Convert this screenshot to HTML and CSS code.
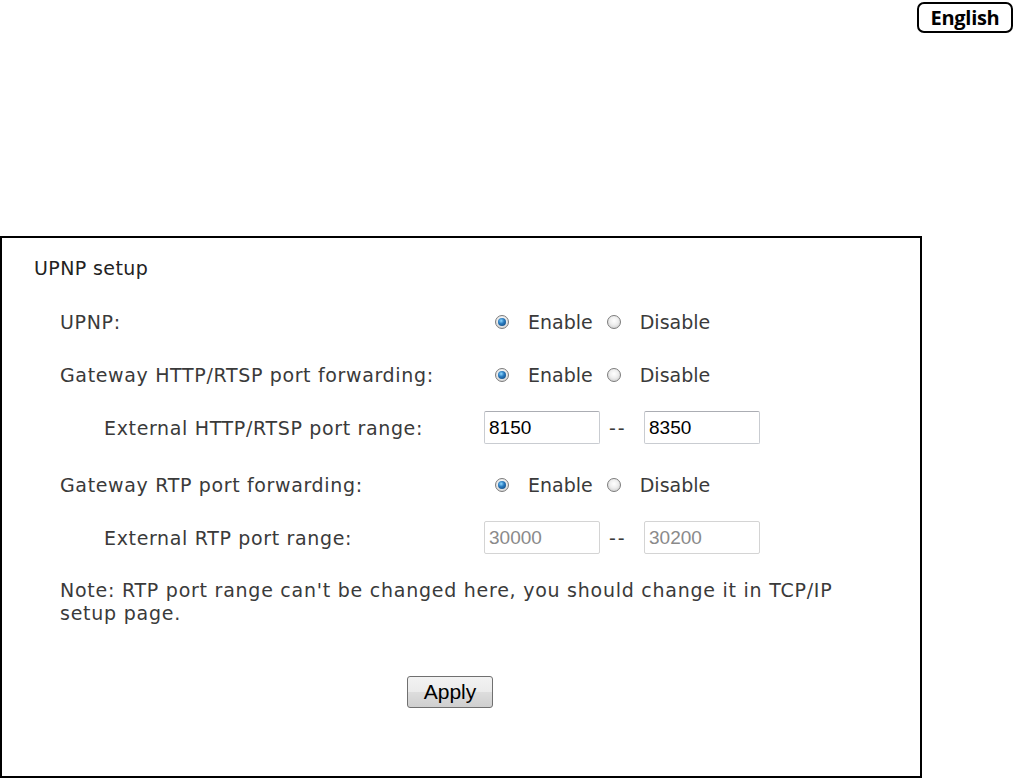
FILE: index.html
```html
<!DOCTYPE html>
<html lang="en">
<head>
<meta charset="utf-8">
<title>UPNP setup</title>
<link rel="stylesheet" href="styles.css">
</head>
<body>
<header class="top">
  <button class="lang" type="button">English</button>
</header>
<main class="panel">
  <div class="title">UPNP setup</div>
  <div class="form">
    <div class="row">
      <div class="label">UPNP:</div>
      <div class="ctrl">
        <input class="radio" type="radio" name="upnp" checked><span class="opt">Enable</span>
        <input class="radio radio-2" type="radio" name="upnp"><span class="opt">Disable</span>
      </div>
    </div>
    <div class="row">
      <div class="label">Gateway HTTP/RTSP port forwarding:</div>
      <div class="ctrl">
        <input class="radio" type="radio" name="http" checked><span class="opt">Enable</span>
        <input class="radio radio-2" type="radio" name="http"><span class="opt">Disable</span>
      </div>
    </div>
    <div class="row">
      <div class="label sub">External HTTP/RTSP port range:</div>
      <div class="ctrl">
        <input class="field" type="text" value="8150">
        <span class="sep">--</span>
        <input class="field" type="text" value="8350">
      </div>
    </div>
    <div class="row row-gap">
      <div class="label">Gateway RTP port forwarding:</div>
      <div class="ctrl">
        <input class="radio" type="radio" name="rtp" checked><span class="opt">Enable</span>
        <input class="radio radio-2" type="radio" name="rtp"><span class="opt">Disable</span>
      </div>
    </div>
    <div class="row">
      <div class="label sub">External RTP port range:</div>
      <div class="ctrl">
        <input class="field" type="text" value="30000" disabled>
        <span class="sep">--</span>
        <input class="field" type="text" value="30200" disabled>
      </div>
    </div>
    <p class="note">Note: RTP port range can't be changed here, you should change it in TCP/IP setup page.</p>
    <div class="actions">
      <button class="apply" type="button">Apply</button>
    </div>
  </div>
</main>
</body>
</html>
```
FILE: styles.css
```css
* { box-sizing: border-box; }

html, body {
  margin: 0;
  padding: 0;
  background: #fff;
}

body {
  width: 1018px;
  height: 778px;
  overflow: hidden;
  font-family: "DejaVu Sans", Verdana, sans-serif;
  font-size: 19px;
  color: #3a3a3a;
}

.top {
  height: 236px;
  display: flex;
  justify-content: flex-end;
  align-items: flex-start;
  padding: 2px 5px 0 0;
}

.lang {
  height: 31px;
  width: 96px;
  border: 2px solid #000;
  border-radius: 7px;
  background: #fff;
  font-family: "Open Sans", sans-serif;
  font-weight: 700;
  font-size: 20px;
  line-height: 25px;
  color: #000;
  padding: 0;
  letter-spacing: -0.3px;
}

.panel {
  width: 922px;
  height: 542px;
  border: 2px solid #000;
  padding: 19px 0 0 32px;
}

.title {
  line-height: 22px;
  height: 22px;
  color: #222;
  letter-spacing: 0.4px;
}

.form {
  width: 780px;
  margin: 16px 0 0 26px;
}

.row {
  display: flex;
  align-items: center;
  height: 53px;
}

.row-gap { margin-top: 4px; }

.label {
  width: 424px;
  flex: none;
  white-space: nowrap;
  letter-spacing: 0.65px;
}

.label.sub { padding-left: 44px; }

.ctrl {
  display: flex;
  align-items: center;
}

.radio {
  appearance: none;
  -webkit-appearance: none;
  width: 14px;
  height: 14px;
  margin: 0 19px 0 11px;
  border-radius: 50%;
  border: 1px solid #7c7c7c;
  background: radial-gradient(circle at 50% 40%, #ffffff 0%, #eeeeee 45%, #c4c4c4 100%);
  position: relative;
  flex: none;
}

.radio-2 { margin-left: 14px; }

.radio:checked::after {
  content: "";
  position: absolute;
  left: 2px;
  top: 2px;
  width: 8px;
  height: 8px;
  border-radius: 50%;
  background: radial-gradient(circle at 40% 35%, #8fd8ff 0%, #2a7cc0 40%, #0f3f72 100%);
}

.opt { line-height: 22px; }

.field {
  width: 116px;
  height: 33px;
  border: 1px solid #c9ccd1;
  border-top-color: #abadb3;
  border-radius: 2px;
  background: #fff;
  font-family: "Liberation Sans", Arial, sans-serif;
  font-size: 19px;
  color: #000;
  padding: 0 0 0 4px;
  margin: 0;
}

.field:disabled {
  color: #8a8a8a;
  border-color: #d4d4d4;
  background: #fff;
}

.sep {
  width: 44px;
  padding-left: 9px;
  letter-spacing: 2px;
  line-height: 22px;
}

.note {
  margin: 15px 0 0 0;
  width: 800px;
  line-height: 23px;
  letter-spacing: 0.75px;
}

.actions {
  display: flex;
  justify-content: center;
  margin-top: 51px;
}

.apply {
  width: 86px;
  height: 32px;
  border: 1px solid #707070;
  border-radius: 3px;
  background: linear-gradient(#f2f2f2 0%, #ebebeb 50%, #dddddd 51%, #cfcfcf 100%);
  font-family: "Liberation Sans", Arial, sans-serif;
  font-size: 21px;
  color: #000;
  padding: 0;
}
```
